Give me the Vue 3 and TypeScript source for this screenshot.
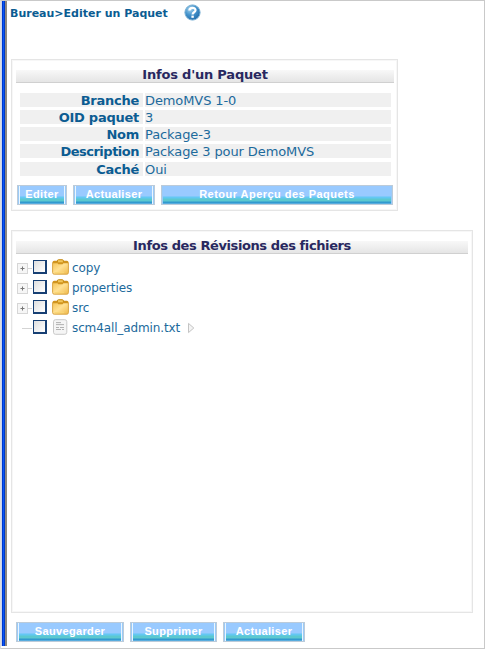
<script setup lang="ts">
interface InfoRow { label: string; value: string; tight?: boolean }
interface TreeNode { name: string; folder: boolean }

const infos: InfoRow[] = [
  { label: 'Branche', value: 'DemoMVS 1-0' },
  { label: 'OID paquet', value: '3' },
  { label: 'Nom', value: 'Package-3' },
  { label: 'Description', value: 'Package 3 pour DemoMVS', tight: true },
  { label: 'Caché', value: 'Oui' },
]

const nodes: TreeNode[] = [
  { name: 'copy', folder: true },
  { name: 'properties', folder: true },
  { name: 'src', folder: true },
  { name: 'scm4all_admin.txt', folder: false },
]
</script>

<template>
  <div class="window">
    <div class="stripe"></div>
    <main class="content">
      <header class="crumb">
        <span class="crumb-text">Bureau&gt;Editer un Paquet</span>
        <svg class="help" width="17" height="17" viewBox="0 0 17 17">
          <defs>
            <radialGradient id="helpFill" cx="35%" cy="28%" r="75%">
              <stop offset="0" stop-color="#a5d3ee" />
              <stop offset=".5" stop-color="#4695cd" />
              <stop offset="1" stop-color="#246eac" />
            </radialGradient>
          </defs>
          <circle cx="8.5" cy="8.5" r="7.6" fill="url(#helpFill)" stroke="#79afd3" stroke-width="1" />
          <path d="M5.4 6.5C5.5 3 11.6 3 11.5 6.3C11.4 8.3 8.6 8.2 8.6 10.4" fill="none" stroke="#fff" stroke-width="2.2" />
          <rect x="7.4" y="11.6" width="2.4" height="2.2" fill="#fff" />
        </svg>
      </header>

      <section class="panel package">
        <h2 class="title">Infos d'un Paquet</h2>
        <dl class="infos">
          <div v-for="row in infos" :key="row.label" class="row">
            <dt :class="{ tight: row.tight }">{{ row.label }}</dt>
            <dd>{{ row.value }}</dd>
          </div>
        </dl>
        <div class="buttons">
          <button class="btn edit">Editer</button>
          <button class="btn refresh">Actualiser</button>
          <button class="btn back">Retour Aperçu des Paquets</button>
        </div>
      </section>

      <section class="panel files">
        <h2 class="title files-title">Infos des Révisions des fichiers</h2>
        <ul class="tree">
          <li v-for="node in nodes" :key="node.name" class="node">
            <svg class="branch" width="15" height="20" viewBox="0 0 15 20">
              <template v-if="node.folder">
                <path d="M11 10.5H15" stroke="#d4d4d4" />
                <rect x=".5" y="5.5" width="10" height="10" fill="#f6f6f6" stroke="#d6d6d6" />
                <path d="M3.5 10.5H7.5M5.5 8.5V12.5" stroke="#777" />
              </template>
              <path v-else d="M5 10.5H15" stroke="#d4d4d4" />
            </svg>
            <span class="check"></span>
            <svg v-if="node.folder" class="icon" width="17" height="16" viewBox="0 0 17 16">
              <defs>
                <linearGradient id="folderFill" x1="0" y1="0" x2="1" y2="1">
                  <stop offset="0" stop-color="#f3c04e" />
                  <stop offset=".5" stop-color="#ffe194" />
                  <stop offset="1" stop-color="#efb949" />
                </linearGradient>
              </defs>
              <rect x=".6" y="2.2" width="15.8" height="13" rx="1.6" fill="url(#folderFill)" stroke="#d9a545" />
              <path d="M1 2.8Q1 2 2 2H15Q16 2 16 2.8V4.2H11.3L10.5 5.2H6.3L5.5 4.2H1Z" fill="#d0941f" />
              <path d="M5.4 3.2V1.8Q5.4.7 6.5.7H10.3Q11.4.7 11.4 1.8V3.2" fill="#f2c65a" stroke="#c58a17" />
              <path d="M2.5 13.6H12" stroke="#f9d774" />
            </svg>
            <svg v-else class="icon" width="17" height="16" viewBox="0 0 17 16">
              <rect x="1.5" y=".7" width="13.3" height="14.6" rx="2" fill="#f5f5f5" stroke="#c9c9c9" />
              <path d="M4 3.6H9M4 5.6H12M4 8.5H7M8 8.5H12M4 10.5H9M10 10.5H12" stroke="#aaa" stroke-width=".9" />
            </svg>
            <span class="name">{{ node.name }}</span>
            <svg v-if="!node.folder" class="arrow" width="8" height="12" viewBox="0 0 8 12">
              <path d="M1.5 1.4V10.6L6.8 6Z" fill="#f4f4f4" stroke="#c4c4c4" />
            </svg>
          </li>
        </ul>
      </section>

      <footer class="buttons bottom">
        <button class="btn save">Sauvegarder</button>
        <button class="btn remove">Supprimer</button>
        <button class="btn refresh">Actualiser</button>
      </footer>
    </main>
  </div>
</template>

<style>
body { margin: 0; overflow: hidden; background: #fff; }
</style>

<style scoped>
* { box-sizing: border-box; }
.window {
  width: 485px; height: 649px; display: flex;
  border: 1px solid #c9c9c9; border-left-color: #ddd;
  font-family: "DejaVu Sans", Verdana, sans-serif; color: #1c6a9c;
}
.stripe {
  width: 6px; height: 645px; flex: none;
  background: linear-gradient(90deg, #c7d4ee 0 1px, #0038cf 1px 2px, #0757f5 2px 3px, #0038c8 3px 4px, #8b8781 4px 6px);
}
.content { padding-left: 3px; flex: none; }
.crumb { height: 58px; display: flex; align-items: flex-start; }
.crumb-text {
  width: 174px; padding-top: 5px; font-size: 11px; line-height: 15px;
  font-weight: bold; color: #0b5c92; white-space: nowrap; letter-spacing: 0;
}
.help { margin-top: 3px; }
.panel { border: 1px solid #e5e5e5; margin-left: 1px; box-shadow: inset 0 0 0 1px #f7f7f7; }
.package { width: 387px; height: 152px; padding: 7px 3px 0 4px; }
.files { width: 462px; height: 383px; margin-top: 19px; padding: 7px 4px 0; }
.title {
  margin: 0; height: 16px; line-height: 16px; text-align: center; font-size: 13px;
  color: #28285f; white-space: nowrap; letter-spacing: -.2px;
  background: linear-gradient(#f8f8f8, #e5e5e5) 0 100% / 100% 12px no-repeat;
  border-bottom: 1px solid #d0d0d0;
}
.files-title { letter-spacing: -.4px; }
.infos { margin: 10px 3px 0 4px; display: grid; grid-template-rows: 17px 17px 17px 18px 14px; }
.row { display: grid; grid-template-columns: 123px 1fr; gap: 2px; height: 14px; }
dt, dd { margin: 0; height: 14px; line-height: 15px; font-size: 13px; background: #f0f0f0; white-space: nowrap; }
dt { font-weight: bold; text-align: right; padding-right: 4px; color: #0b5c92; letter-spacing: -.25px; }
.tight { letter-spacing: -.5px; }
dd { padding-left: 0; letter-spacing: -.1px; }
.buttons { display: flex; gap: 6px; margin: 9px 0 0 1px; }
.btn {
  height: 20px; padding: 0 0 1px; border: 1px solid #bccbd9;
  box-shadow: inset 1px 0 #9bcbf8, inset 2px 0 #eaf6ff, inset -1px 0 #9bcbf8, inset -2px 0 #eaf6ff;
  background: linear-gradient(#99caff 0 10px, #62c8f3 11px 12px, #5cc8cf 13px 15px, #3199cf 16px 17px, #80c0ed 18px);
  font: bold 11px/17px "Liberation Sans", Arial, sans-serif; color: #fff; white-space: nowrap; letter-spacing: .35px;
}
.edit { width: 50px; }
.refresh { width: 82px; }
.back { width: 232px; letter-spacing: .47px; box-shadow: inset 1px 0 #9bcbf8, inset -1px 0 #9bcbf8; }
.bottom { margin: 9px 0 0 6px; }
.save { width: 108px; }
.remove { width: 87px; }
.tree { margin: 4px 0 0 1px; padding: 0; list-style: none; }
.node { height: 20px; display: flex; align-items: center; }
.branch { display: block; }
.check {
  width: 14px; height: 14px; margin: -2px 0 0 1px; border: 2px solid #173f73; border-top-width: 1px; border-left-width: 1px;
  background: linear-gradient(135deg, #dedede, #fff);
}
.icon { margin-left: 5px; margin-top: -2px; }
.name { margin-left: 3px; font-size: 12px; line-height: 18px; white-space: nowrap; letter-spacing: -.12px; }
.arrow { margin-left: 7px; }
</style>
